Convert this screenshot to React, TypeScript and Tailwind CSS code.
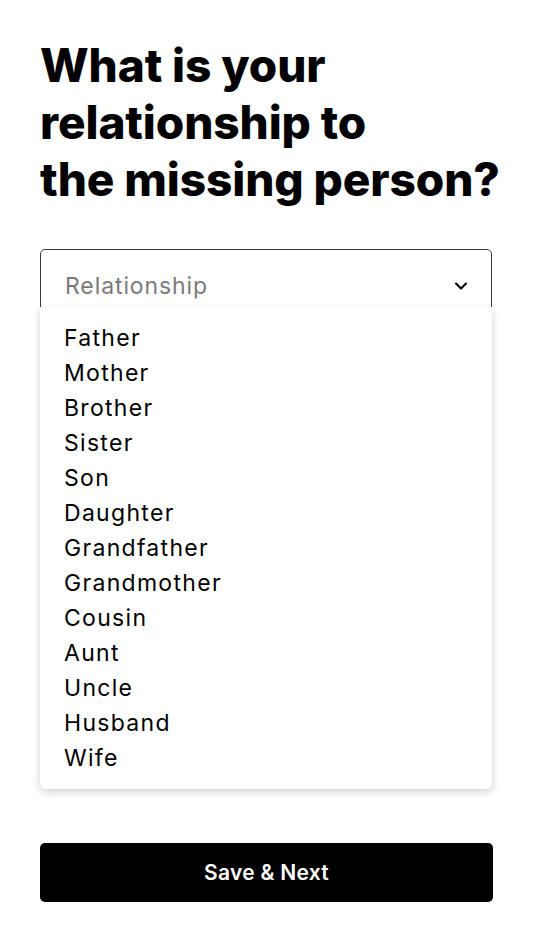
import { ChevronDown } from "lucide-react";

const relationships = [
  "Father",
  "Mother",
  "Brother",
  "Sister",
  "Son",
  "Daughter",
  "Grandfather",
  "Grandmother",
  "Cousin",
  "Aunt",
  "Uncle",
  "Husband",
  "Wife",
];

const App = () => {
  return (
    <div className="min-h-[950px] w-full bg-white px-10 pt-[37px] font-['Inter',sans-serif] text-black">
      <h1 className="whitespace-nowrap text-[46px] font-extrabold leading-[57px] tracking-[-0.1px]">
        What is your
        <br />
        relationship to
        <br />
        the missing person?
      </h1>

      <div className="relative mt-[41px] h-[540px] w-[452px]">
        <div className="flex h-[74px] items-center justify-between rounded-[5px] border border-[#3a3a3a] pl-6 pr-5">
          <span className="text-[23px] tracking-[0.9px] text-[#7a7a7a]">
            {"Relationship"}
          </span>
          <ChevronDown size={20} strokeWidth={2.5} />
        </div>
        <ul className="absolute left-0 right-0 top-[58px] h-[482px] rounded-b-[6px] bg-white pt-[14px] shadow-[0_3px_8px_rgba(0,0,0,0.18)]">
          {relationships.map(item => (
            <li
              key={item}
              className="pl-6 text-[23px] leading-[35px] tracking-[1.3px]"
            >
              {item}
            </li>
          ))}
        </ul>
      </div>

      <button className="mt-[54px] flex h-[59px] w-[453px] items-center justify-center rounded-[5px] bg-black text-[21px] font-semibold tracking-[0.3px] text-white">
        {"Save & Next"}
      </button>
    </div>
  );
};

export default App;
